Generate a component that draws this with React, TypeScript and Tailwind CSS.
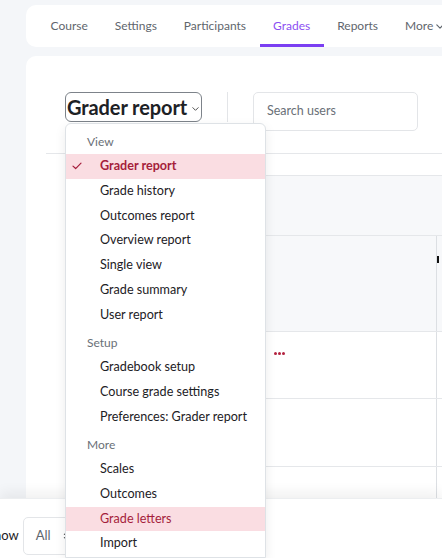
import React from "react";

const tabs = ["Course", "Settings", "Participants", "Grades", "Reports"];

type Entry = { kind: "header"; label: string; first?: boolean } | { kind: "item"; label: string; state?: "current" | "hover" };

const menu: Entry[] = [
  { kind: "header", label: "View", first: true },
  { kind: "item", label: "Grader report", state: "current" },
  { kind: "item", label: "Grade history" },
  { kind: "item", label: "Outcomes report" },
  { kind: "item", label: "Overview report" },
  { kind: "item", label: "Single view" },
  { kind: "item", label: "Grade summary" },
  { kind: "item", label: "User report" },
  { kind: "header", label: "Setup" },
  { kind: "item", label: "Gradebook setup" },
  { kind: "item", label: "Course grade settings" },
  { kind: "item", label: "Preferences: Grader report" },
  { kind: "header", label: "More" },
  { kind: "item", label: "Scales" },
  { kind: "item", label: "Outcomes" },
  { kind: "item", label: "Grade letters", state: "hover" },
  { kind: "item", label: "Import" },
];

function Chevron({ className }: { className?: string }) {
  return (
    <svg viewBox="0 0 10 6" className={className} fill="none" stroke="currentColor" strokeWidth="1.4" strokeLinecap="round" strokeLinejoin="round">
      <path d="M1 1l4 4 4-4" />
    </svg>
  );
}

function Check() {
  return (
    <svg viewBox="0 0 12 10" className="w-[10px] h-[8px]" fill="none" stroke="currentColor" strokeWidth="1.5" strokeLinecap="round" strokeLinejoin="round">
      <path d="M1 5.2l3.3 3L11 1.5" />
    </svg>
  );
}

function SortIcon() {
  return (
    <svg viewBox="0 0 10 14" className="w-[9px] h-[12px] text-[#1d2125]" fill="currentColor">
      <path d="M5 0.5L9.5 5.5H0.5z" />
      <path d="M5 13.5L0.5 8.5H9.5z" />
    </svg>
  );
}

export default function App() {
  return (
    <div className="relative w-[442px] h-[558px] overflow-hidden bg-[#f4f6f9] font-['Lato',sans-serif] text-[#1d2125]">
      {/* secondary navigation */}
      <div className="pt-[5px] pl-[26px]">
        <nav className="flex h-[42px] items-stretch bg-white rounded-l-[10px] pl-[11px] whitespace-nowrap">
          {tabs.map((t) => {
            const active = t === "Grades";
            return (
              <div
                key={t}
                className={`flex items-center pt-[3px] px-[13.5px] text-[12px] border-b-[3px] ${
                  active ? "border-[#7b3ff2] text-[#8c4ff2]" : "border-transparent text-[#5f666d]"
                }`}
              >
                {t}
              </div>
            );
          })}
          <div className="flex items-center pt-[3px] gap-[3px] px-[13.5px] text-[12px] text-[#5f666d] border-b-[3px] border-transparent">
            More
            <Chevron className="w-[8px] h-[5px]" />
          </div>
        </nav>
      </div>

      {/* report card */}
      <div className="ml-[26px] mt-[9px] bg-white rounded-tl-[10px] h-[520px] pt-[36px] pl-[20px]">
        <div className="flex items-start pl-[19px] pb-[22px] border-b border-[#e5e7ea]">
          <div className="flex items-center h-[30px] w-[137px] border border-[#7d838a] rounded-[6px] pl-[1px] gap-[5px]">
            <span className="text-[20px] font-bold leading-none tracking-[-0.1px]">Grader report</span>
            <Chevron className="w-[7px] h-[4px] mt-[3px] text-[#444]" />
          </div>
          <div className="w-px h-[30px] bg-[#e3e5e8] ml-[25px]" />
          <div className="ml-[25px] w-[165px] h-[39px] border border-[#e3e5e8] rounded-[5px] flex items-center pl-[13px] text-[12.5px] text-[#6a7077]">
            Search users
          </div>
        </div>

        {/* grade table */}
        <div className="mt-[21px] ml-[19px] border-t border-[#e5e7ea]">
          <div className="h-[60px] bg-[#f7f8fa] border-b border-[#e5e7ea]" />
          <div className="h-[96px] bg-[#f7f8fa] border-b border-[#e5e7ea] flex">
            <div className="flex-1" />
            <div className="w-px bg-[#dcdfe3] relative">
              <div className="absolute left-[1px] top-[20px] w-[2px] h-[7px] bg-[#111]" />
            </div>
            <div className="w-[5px]" />
          </div>
          {[67, 68, 40].map((h, i) => (
            <div key={i} className="flex border-b border-[#e5e7ea]" style={{ height: h }}>
              <div className="flex-1 relative">
                {i === 0 && (
                  <div className="absolute left-[209px] top-[20px] flex gap-[1px]">
                    <span className="w-[3px] h-[3px] rounded-full bg-[#b3223f]" />
                    <span className="w-[3px] h-[3px] rounded-full bg-[#b3223f]" />
                    <span className="w-[3px] h-[3px] rounded-full bg-[#b3223f]" />
                  </div>
                )}
              </div>
              <div className="w-px bg-[#dcdfe3]" />
              <div className="w-[5px]" />
            </div>
          ))}
        </div>
      </div>

      {/* sticky footer */}
      <div className="absolute left-0 right-0 bottom-0 h-[60px] bg-white shadow-[0_-6px_12px_rgba(0,0,0,0.06)] border-t border-[#eceef0] flex items-start">
        <span className="text-[13px] ml-[-13px] mt-[28px] leading-[16px]">Show</span>
        <div className="ml-[4px] mt-[18px] h-[38px] w-[80px] border border-[#e3e5e8] rounded-[5px] flex items-center pl-[12px] gap-[12px]">
          <span className="text-[13px] text-[#5f666d]">All</span>
          <SortIcon />
        </div>
      </div>

      {/* report selector menu */}
      <div className="absolute left-[65px] top-[123px] w-[201px] bottom-0 bg-white border border-[#dee2e6] rounded-t-[6px] shadow-[0_4px_12px_rgba(0,0,0,0.08)] pt-[6px]">
        {menu.map((e) =>
          e.kind === "header" ? (
            <div
              key={e.label}
              className={`h-[24px] flex items-center pl-[21px] text-[12px] text-[#6a7077] ${e.first ? "" : "mt-[3.5px]"}`}
            >
              {e.label}
            </div>
          ) : (
            <div
              key={e.label}
              className={`h-[24.8px] flex items-center text-[12.6px] ${
                e.state === "current"
                  ? "bg-[#fadde2] text-[#a51d3b] font-bold"
                  : e.state === "hover"
                  ? "bg-[#fadde2] text-[#a51d3b]"
                  : "text-[#1d2125]"
              }`}
            >
              <span className="w-[34px] flex justify-center pr-[12px]">{e.state === "current" && <Check />}</span>
              {e.label}
            </div>
          )
        )}
      </div>
    </div>
  );
}
